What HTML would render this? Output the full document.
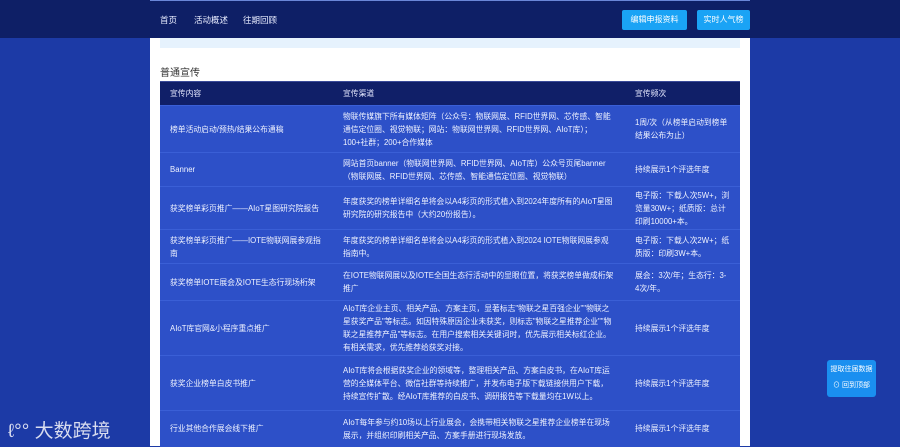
<!DOCTYPE html>
<html><head><meta charset="utf-8"><style>
*{margin:0;padding:0;box-sizing:border-box}
body{width:900px;height:446px;overflow:hidden;background:#1c3aa6;font-family:"Liberation Sans","Noto Sans CJK SC",sans-serif;position:relative;color:#fff}
.hdr{position:absolute;left:0;top:0;width:900px;height:38px;background:#0e1f66}
.hdr .line{position:absolute;left:150px;top:0;width:600px;height:1px;background:#6a86d8}
.nav{position:absolute;top:14px;font-size:8.5px;color:#e8ecff}
.btn{position:absolute;top:10px;height:20px;background:#1aa3f5;border-radius:2px;font-size:8px;line-height:20px;text-align:center;color:#fff}
.panel{position:absolute;left:150px;top:38px;width:600px;height:408px;background:#fff}
.strip{position:absolute;left:10px;top:0;width:580px;height:10px;background:#e6f2fd}
.title{position:absolute;left:10px;top:26px;font-size:10px;color:#333}
table{position:absolute;left:160px;top:81px;width:580px;border-collapse:collapse;font-size:7.8px;line-height:13px}
th{background:#101f68;text-align:left;font-weight:normal;height:24px;padding:0 10px;color:#e6e9ff;border-top:1px solid #3a4a99}
td{background:#2d50c8;padding:0 10px;vertical-align:middle;border-top:1px solid #3a5fd6;color:#f0f3ff}
.fl{position:absolute;left:827px;top:360px;width:49px;height:37px;background:#1a8ff0;border-radius:3px;font-size:7px;color:#fff;text-align:center;line-height:16px;padding-top:2px}
.logo{position:absolute;left:8px;top:416px;font-size:19px;color:#d8dcef;letter-spacing:0}
</style></head><body>
<div class="hdr"><div class="line"></div>
<span class="nav" style="left:160px">首页</span>
<span class="nav" style="left:194px">活动概述</span>
<span class="nav" style="left:243px">往期回顾</span>
<div class="btn" style="left:622px;width:65px">编辑申报资料</div>
<div class="btn" style="left:697px;width:53px">实时人气榜</div>
</div>
<div class="panel"><div class="strip"></div><div class="title">普通宣传</div></div>
<table>
<tr><th style="width:173px">宣传内容</th><th style="width:292px">宣传渠道</th><th>宣传频次</th></tr>
<tr style="height:47px"><td>榜单活动启动/预热/结果公布通稿</td><td>物联传媒旗下所有媒体矩阵（公众号：物联网展、RFID世界网、芯传感、智能通信定位圈、视觉物联；网站：物联网世界网、RFID世界网、AIoT库）；100+社群；200+合作媒体</td><td>1周/次（从榜单启动到榜单结果公布为止）</td></tr>
<tr style="height:34px"><td>Banner</td><td>网站首页banner（物联网世界网、RFID世界网、AIoT库）公众号页尾banner（物联网展、RFID世界网、芯传感、智能通信定位圈、视觉物联）</td><td>持续展示1个评选年度</td></tr>
<tr style="height:43px"><td>获奖榜单彩页推广——AIoT星图研究院报告</td><td>年度获奖的榜单详细名单将会以A4彩页的形式植入到2024年度所有的AIoT星图研究院的研究报告中（大约20份报告）。</td><td>电子版：下载人次5W+，浏览量30W+；纸质版：总计印刷10000+本。</td></tr>
<tr style="height:34px"><td>获奖榜单彩页推广——IOTE物联网展参观指南</td><td>年度获奖的榜单详细名单将会以A4彩页的形式植入到2024 IOTE物联网展参观指南中。</td><td>电子版：下载人次2W+；纸质版：印刷3W+本。</td></tr>
<tr style="height:37px"><td>获奖榜单IOTE展会及IOTE生态行现场桁架</td><td>在IOTE物联网展以及IOTE全国生态行活动中的显眼位置，将获奖榜单做成桁架推广</td><td>展会：3次/年；生态行：3-4次/年。</td></tr>
<tr style="height:55px"><td>AIoT库官网&amp;小程序重点推广</td><td>AIoT库企业主页、相关产品、方案主页，显著标志"物联之星百强企业""物联之星获奖产品"等标志。如因特殊原因企业未获奖，则标志"物联之星推荐企业""物联之星推荐产品"等标志。在用户搜索相关关键词时，优先展示相关标红企业。有相关需求，优先推荐给获奖对接。</td><td>持续展示1个评选年度</td></tr>
<tr style="height:55px"><td>获奖企业榜单白皮书推广</td><td>AIoT库将会根据获奖企业的领域等，整理相关产品、方案白皮书，在AIoT库运营的全媒体平台、微信社群等持续推广，并发布电子版下载链接供用户下载，持续宣传扩散。经AIoT库推荐的白皮书、调研报告等下载量均在1W以上。</td><td>持续展示1个评选年度</td></tr>
<tr style="height:36px"><td>行业其他合作展会线下推广</td><td>AIoT每年参与约10场以上行业展会，会携带相关物联之星推荐企业榜单在现场展示，并组织印刷相关产品、方案手册进行现场发放。</td><td>持续展示1个评选年度</td></tr>
</table>
<div class="fl">提取往届数据<br>⊙ 回到顶部</div>
<div class="logo">ℓ°° 大数跨境</div>
</body></html>
